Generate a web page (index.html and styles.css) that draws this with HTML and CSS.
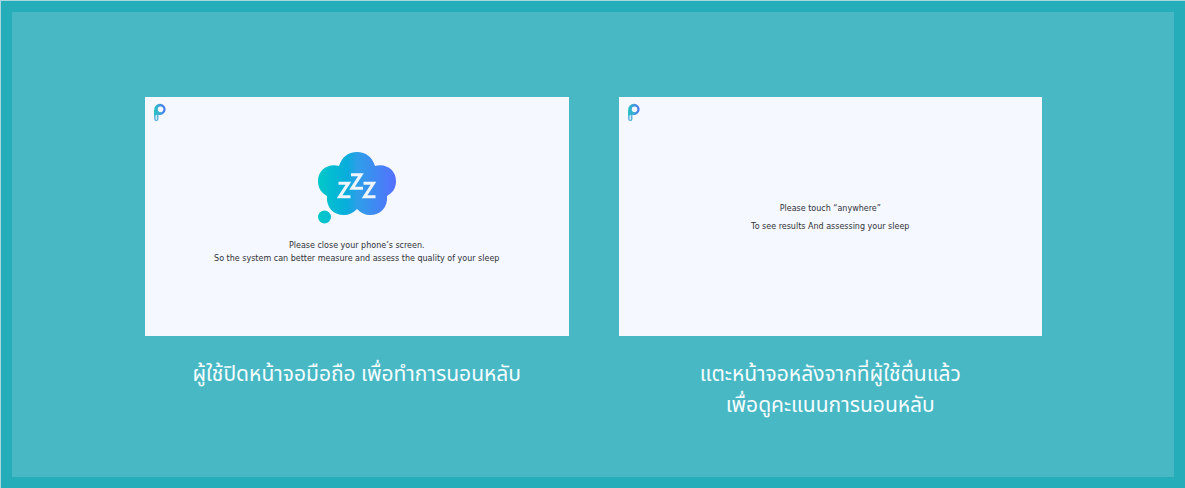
FILE: index.html
```html
<!DOCTYPE html>
<html lang="th">
<head>
<meta charset="utf-8">
<meta name="viewport" content="width=device-width, initial-scale=1">
<title>Sleep tracking</title>
<link rel="stylesheet" href="styles.css">
</head>
<body>
<svg class="defs" width="0" height="0" aria-hidden="true">
  <defs>
    <linearGradient id="logo-fill" x1="0" y1="0.5" x2="1" y2="0.4">
      <stop offset="0" stop-color="#25c3c4"/>
      <stop offset="0.5" stop-color="#3f9fdc"/>
      <stop offset="1" stop-color="#4a72f5"/>
    </linearGradient>
    <symbol id="logo" viewBox="0 0 14 19">
      <path d="M1.800 7v9a1.500 1.500 0 0 0 3 0V11" fill="#cdeaf6" stroke="#45aadb" stroke-width="1.200"/>
      <path fill="url(#logo-fill)" fill-rule="evenodd" d="M7 .8a5.600 5.600 0 1 1-1.500 11L4.500 11.500 1.200 13V6.500A5.700 5.700 0 0 1 7 .8zM7.500 3.600a2.800 2.800 0 1 0 .1 5.600 2.800 2.800 0 0 0-.1-5.600z"/>
      <path d="M4.600 6.500a3.200 3.200 0 0 0 4.200 3l-2.300 1.200-2.500-1.500z" fill="#38b9cb"/>
    </symbol>
  </defs>
</svg>
<main class="frame">
  <figure class="step">
    <div class="screen">
      <svg class="logo" role="img" aria-label="P"><use href="#logo"/></svg>
      <svg class="cloud" viewBox="0 0 80 74" role="img" aria-label="Sleeping">
        <defs>
          <linearGradient id="cloud-fill" gradientUnits="userSpaceOnUse" x1="1" y1="0" x2="79" y2="0">
            <stop offset="0" stop-color="#00c9c8"/>
            <stop offset="0.370" stop-color="#08addd"/>
            <stop offset="0.500" stop-color="#2d9fe8"/>
            <stop offset="1" stop-color="#5570ff"/>
          </linearGradient>
        </defs>
        <g fill="url(#cloud-fill)">
          <path d="M22 15C25 6 31 1 40 1s15 5 18 14c11-3 21 4 21 15 0 8-4 12-9 15 1 12-7 19-17 19-5 0-9-2-13-6-4 4-8 6-13 6-11 0-18-8-17-19-5-3-9-7-9-15 0-11 10-18 21-15z"/>
          <circle cx="7.500" cy="66" r="6.500"/>
        </g>
        <g fill="none" stroke="#edf6ff" stroke-width="3">
          <path d="M21.500 32.200H31.500L22.500 45.800H33.500"/>
          <path d="M34 23.700H44L35 37.300H46"/>
          <path d="M46.500 32.200H56.500L47.500 45.800H58.500"/>
        </g>
      </svg>
      <p class="message">Please close your phone’s screen.<br>So the system can better measure and assess the quality of your sleep</p>
    </div>
    <figcaption class="caption">ผู้ใช้ปิดหน้าจอมือถือ เพื่อทำการนอนหลับ</figcaption>
  </figure>
  <figure class="step">
    <div class="screen">
      <svg class="logo" role="img" aria-label="P"><use href="#logo"/></svg>
      <p class="message message-spaced">Please touch “anywhere”<br>To see results And assessing your sleep</p>
    </div>
    <figcaption class="caption">แตะหน้าจอหลังจากที่ผู้ใช้ตื่นแล้ว<br>เพื่อดูคะแนนการนอนหลับ</figcaption>
  </figure>
</main>
</body>
</html>
```
FILE: styles.css
```css
* { box-sizing: border-box; }
body { margin: 0; padding: 1px 0 0 1px; background: #a9d9df; }
.defs { position: absolute; }
.frame {
  display: grid;
  grid-template-columns: 1fr 1fr;
  gap: 50px;
  min-height: calc(100vh - 1px);
  padding: 85px 132px 50px 133px;
  border: 11px solid #26adba;
  background: #48b8c5;
}
.step { margin: 0; }
.screen {
  display: grid;
  grid-template-rows: 30px 81px 1fr;
  align-items: start;
  height: 239px;
  background: #f5f8fe;
}
.logo { width: 14px; height: 19px; margin: 6px 0 0 8px; }
.cloud { width: 80px; height: 74px; margin: 24px auto 0; }
.message {
  grid-row: 3;
  margin: 0;
  padding-top: 31px;
  color: #303238;
  font: 8px/13px "DejaVu Sans", sans-serif;
  text-align: center;
}
.message-spaced { grid-row: 2 / 4; padding-top: 73px; line-height: 18px; }
.caption {
  padding-top: 23px;
  color: #f5fdff;
  font: 21px/31px "Noto Sans Thai", "Noto Sans", sans-serif;
  text-align: center;
}
```
